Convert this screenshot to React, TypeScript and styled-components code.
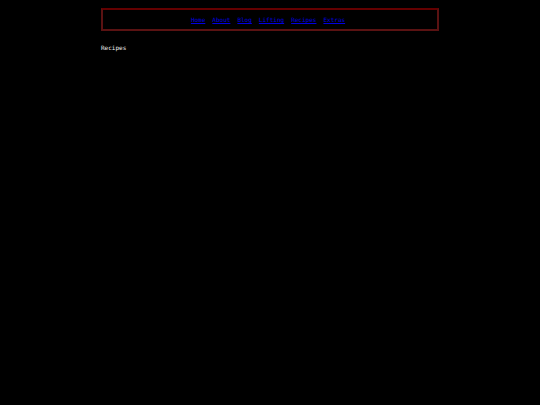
import React from "react";
import styled, { createGlobalStyle } from "styled-components";

const links = ["Home", "About", "Blog", "Lifting", "Recipes", "Extras"];

const App = () => {
  return (
    <Container>
      <GlobalStyle />
      <Nav>
        {links.map((name) => (
          <NavLink key={name} href={`#${name.toLowerCase()}`}>
            {name}
          </NavLink>
        ))}
      </Nav>
      <Main>
        <Text>Recipes</Text>
      </Main>
    </Container>
  );
};

export default App;

const GlobalStyle = createGlobalStyle`
  body {
    margin: 8px;
    background-color: #000;
    color: #eee;
    font-family: "DejaVu Sans Mono", monospace;
    font-size: 6px;
    line-height: 8px;
  }
`;

const Container = styled.div`
  max-width: 338px;
  margin: 0 auto;
`;

const Nav = styled.nav`
  display: flex;
  justify-content: center;
  gap: 7px;
  padding: 6px 4px 5px 0;
  border: 2px solid #5a1212;
  border-top-color: #640000;
`;

const NavLink = styled.a`
  color: #0000e0;
  text-decoration: underline;
`;

const Main = styled.main`
  margin-top: 13px;
`;

const Text = styled.p`
  margin: 0;
`;
